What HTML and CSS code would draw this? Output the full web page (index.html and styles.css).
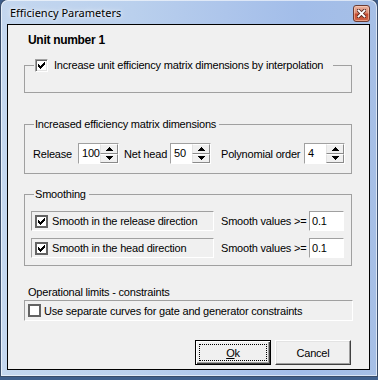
FILE: index.html
```
<!DOCTYPE html>
<html>
<head>
<meta charset="utf-8">
<title>Efficiency Parameters</title>
<link rel="stylesheet" href="styles.css">
</head>
<body>
<div class="window">
  <div class="titlebar">
    <span class="title">Efficiency Parameters</span>
    <span class="close"><svg width="9" height="9" viewBox="0 0 9 9"><path d="M1.5 1.5L7.5 7.5M7.5 1.5L1.5 7.5" stroke="#5a2a22" stroke-width="3.6" stroke-linecap="square"/><path d="M1.5 1.5L7.5 7.5M7.5 1.5L1.5 7.5" stroke="#fff" stroke-width="1.8" stroke-linecap="square"/></svg></span>
  </div>
  <div class="client">
    <div class="unit">Unit number 1</div>

    <fieldset class="group g1">
      <legend class="lg lg-check"><span class="chk chk-3d"><svg width="7" height="7" viewBox="0 0 7 7" shape-rendering="crispEdges"><path d="M0 2H1V3H2V4H3V3H4V2H5V1H6V0H7V3H6V4H5V5H4V6H3V7H2V6H1V5H0Z" fill="#000"/></svg></span><span>Increase unit efficiency matrix dimensions by interpolation</span></legend>
      <div class="g1-body"></div>
    </fieldset>

    <fieldset class="group g2">
      <legend class="lg">Increased efficiency matrix dimensions</legend>
      <div class="dims">
        <span class="l-release">Release</span>
        <div class="spin"><span class="val">100</span><div class="spin-btns"><span class="sb"><svg width="7" height="4" viewBox="0 0 7 4" shape-rendering="crispEdges"><path d="M3 0H4V1H5V2H6V3H7V4H0V3H1V2H2V1H3Z"/></svg></span><span class="sb"><svg width="7" height="4" viewBox="0 0 7 4" shape-rendering="crispEdges"><path d="M0 0H7V1H6V2H5V3H4V4H3V3H2V2H1V1H0Z"/></svg></span></div></div>
        <span class="l-net">Net head</span>
        <div class="spin"><span class="val">50</span><div class="spin-btns"><span class="sb"><svg width="7" height="4" viewBox="0 0 7 4" shape-rendering="crispEdges"><path d="M3 0H4V1H5V2H6V3H7V4H0V3H1V2H2V1H3Z"/></svg></span><span class="sb"><svg width="7" height="4" viewBox="0 0 7 4" shape-rendering="crispEdges"><path d="M0 0H7V1H6V2H5V3H4V4H3V3H2V2H1V1H0Z"/></svg></span></div></div>
        <span class="l-poly">Polynomial order</span>
        <div class="spin"><span class="val">4</span><div class="spin-btns"><span class="sb"><svg width="7" height="4" viewBox="0 0 7 4" shape-rendering="crispEdges"><path d="M3 0H4V1H5V2H6V3H7V4H0V3H1V2H2V1H3Z"/></svg></span><span class="sb"><svg width="7" height="4" viewBox="0 0 7 4" shape-rendering="crispEdges"><path d="M0 0H7V1H6V2H5V3H4V4H3V3H2V2H1V1H0Z"/></svg></span></div></div>
      </div>
    </fieldset>

    <fieldset class="group g3">
      <legend class="lg">Smoothing</legend>
      <div class="srow first">
        <div class="spanel"><span class="chk chk-flat"><svg width="7" height="7" viewBox="0 0 7 7" shape-rendering="crispEdges"><path d="M0 2H1V3H2V4H3V3H4V2H5V1H6V0H7V3H6V4H5V5H4V6H3V7H2V6H1V5H0Z" fill="#000"/></svg></span><span>Smooth in the release direction</span></div>
        <span class="slabel">Smooth values &gt;=</span>
        <div class="edit">0.1</div>
      </div>
      <div class="srow second">
        <div class="spanel"><span class="chk chk-flat"><svg width="7" height="7" viewBox="0 0 7 7" shape-rendering="crispEdges"><path d="M0 2H1V3H2V4H3V3H4V2H5V1H6V0H7V3H6V4H5V5H4V6H3V7H2V6H1V5H0Z" fill="#000"/></svg></span><span>Smooth in the head direction</span></div>
        <span class="slabel">Smooth values &gt;=</span>
        <div class="edit">0.1</div>
      </div>
    </fieldset>

    <div class="oplabel">Operational limits - constraints</div>
    <div class="oppanel"><span class="chk chk-flat"></span><span>Use separate curves for gate and generator constraints</span></div>

    <div class="btns">
      <button class="btn btn-default"><span class="focus"><u>O</u>k</span></button>
      <button class="btn">Cancel</button>
    </div>
  </div>
</div>
</body>
</html>
```

FILE: styles.css
```
html, body {
  margin: 0;
  padding: 0;
}

body {
  width: 378px;
  height: 380px;
  overflow: hidden;
  background: #3f5f8c;
  font-family: "Liberation Sans", Arial, sans-serif;
  font-size: 11px;
  letter-spacing: -0.2px;
  color: #000;
  white-space: nowrap;
}

.window {
  margin-left: 1px;
  width: 376px;
  height: 376px;
  box-sizing: border-box;
  padding: 0 7px 6px 6px;
  border-radius: 7px 7px 0 0;
  background: linear-gradient(90deg, #c4d7ef 0%, #bad0ed 35%, #adc5eb 60%, #a2bde9 80%, #a6bfe6 100%);
  box-shadow: 0 0 0 1px #3a4d6a, inset 0 0 0 1px rgba(255, 255, 255, 0.6);
}

.titlebar {
  height: 24px;
  display: flex;
  align-items: flex-start;
  justify-content: space-between;
}

.title {
  margin: 5px 0 0 3px;
  font-family: "Noto Sans", "Open Sans", sans-serif;
  font-size: 11px;
  letter-spacing: 0;
  line-height: 16px;
  color: #000;
  text-shadow: 0 0 6px rgba(255, 255, 255, 0.9), 0 0 3px rgba(255, 255, 255, 0.8);
}

.close {
  margin-top: 5px;
  width: 17px;
  height: 17px;
  box-sizing: border-box;
  border: 1px solid #6b3b33;
  border-radius: 3px;
  background: linear-gradient(180deg, #eab3a1 0%, #dc8a72 45%, #c5492e 55%, #cf6447 100%);
  box-shadow: inset 0 0 0 1px rgba(255, 220, 200, 0.5);
  display: flex;
  align-items: center;
  justify-content: center;
}

.client {
  height: 346px;
  box-sizing: border-box;
  border: 1px solid #000;
  background: #f0f0f0;
  padding: 0 17px 0 16px;
}

.unit {
  margin: 7px 0 0 4px;
  font-weight: bold;
  font-size: 12px;
  letter-spacing: -0.3px;
  line-height: 16px;
}

.group {
  margin: 0;
  padding: 0;
  min-inline-size: 0;
  border: 1px solid #a0a0a0;
}

.lg {
  margin-left: 9px;
  padding: 0 3px 0 1px;
  line-height: 14px;
}

.lg-check {
  display: flex;
  align-items: center;
  gap: 6px;
  padding-right: 10px;
}

.g1 { margin-top: 10px; }
.g1-body { height: 20px; }

.g2 { margin-top: 24px; padding-bottom: 9px; }
.g3 { margin-top: 13px; padding-bottom: 7px; }

.chk {
  flex: none;
  width: 13px;
  height: 13px;
  box-sizing: border-box;
  background: #fff;
  display: inline-flex;
  align-items: center;
  justify-content: center;
}

.chk-3d {
  border: 1px solid;
  border-color: #a0a0a0 #fff #fff #a0a0a0;
  box-shadow: inset 1px 1px #696969, inset -1px -1px #e3e3e3;
}

.chk-flat {
  border: 2px solid #636363;
}

.dims {
  display: flex;
  align-items: center;
  height: 21px;
  margin: 12px 0 0 8px;
  line-height: 14px;
}

.l-release { width: 45px; }
.l-net { width: 46px; margin-left: 5px; }
.l-poly { width: 83px; margin-left: 10px; }

.spin {
  flex: none;
  display: flex;
  width: 41px;
  height: 21px;
  box-sizing: border-box;
  background: #fff;
  border: 1px solid;
  border-color: #a0a0a0 #fff #fff #a0a0a0;
}

.spin .val {
  flex: 1;
  padding-left: 3px;
  line-height: 19px;
}

.spin-btns {
  width: 18px;
  display: flex;
  flex-direction: column;
}

.sb {
  flex: 1;
  box-sizing: border-box;
  background: #f0f0f0;
  border: 1px solid;
  border-color: #fff #8a8a8a #8a8a8a #e3e3e3;
  display: flex;
  align-items: center;
  justify-content: center;
}

.srow {
  display: flex;
  align-items: center;
  height: 20px;
  margin-left: 6px;
  line-height: 14px;
}

.srow.first { margin-top: 10px; }
.srow.second { margin-top: 7px; }

.spanel {
  width: 183px;
  height: 20px;
  box-sizing: border-box;
  border: 1px solid;
  border-color: #a0a0a0 #fff #fff #a0a0a0;
  display: flex;
  align-items: center;
  gap: 4px;
  padding-left: 3px;
}

.slabel {
  width: 88px;
  margin-left: 7px;
}

.edit {
  width: 35px;
  height: 20px;
  box-sizing: border-box;
  background: #fff;
  border: 1px solid;
  border-color: #a0a0a0 #fff #fff #a0a0a0;
  padding-left: 2px;
  line-height: 18px;
}

.oplabel {
  margin: 19px 0 0 4px;
  line-height: 14px;
}

.oppanel {
  margin-top: 1px;
  width: 329px;
  height: 21px;
  box-sizing: border-box;
  border: 1px solid;
  border-color: #a0a0a0 #fff #fff #a0a0a0;
  display: flex;
  align-items: center;
  gap: 3px;
  padding-left: 3px;
  line-height: 14px;
}

.btns {
  display: flex;
  justify-content: flex-end;
  gap: 4px;
  margin: 19px 1px 0 0;
}

.btn {
  width: 76px;
  height: 25px;
  box-sizing: border-box;
  margin: 0;
  padding: 0;
  font: inherit;
  letter-spacing: inherit;
  color: #000;
  background: #f0f0f0;
  border: 1px solid;
  border-color: #fff #404040 #404040 #fff;
  box-shadow: inset -1px -1px #a0a0a0, inset 1px 1px #e3e3e3;
}

.btn-default {
  border: 1px solid #000;
  box-shadow: inset 1px 1px #fff, inset -1px -1px #404040, inset -2px -2px #a0a0a0;
  padding: 3px;
  display: flex;
}

.btn-default .focus {
  flex: 1;
  border: 1px dotted #000;
  display: flex;
  align-items: center;
  justify-content: center;
}
```
